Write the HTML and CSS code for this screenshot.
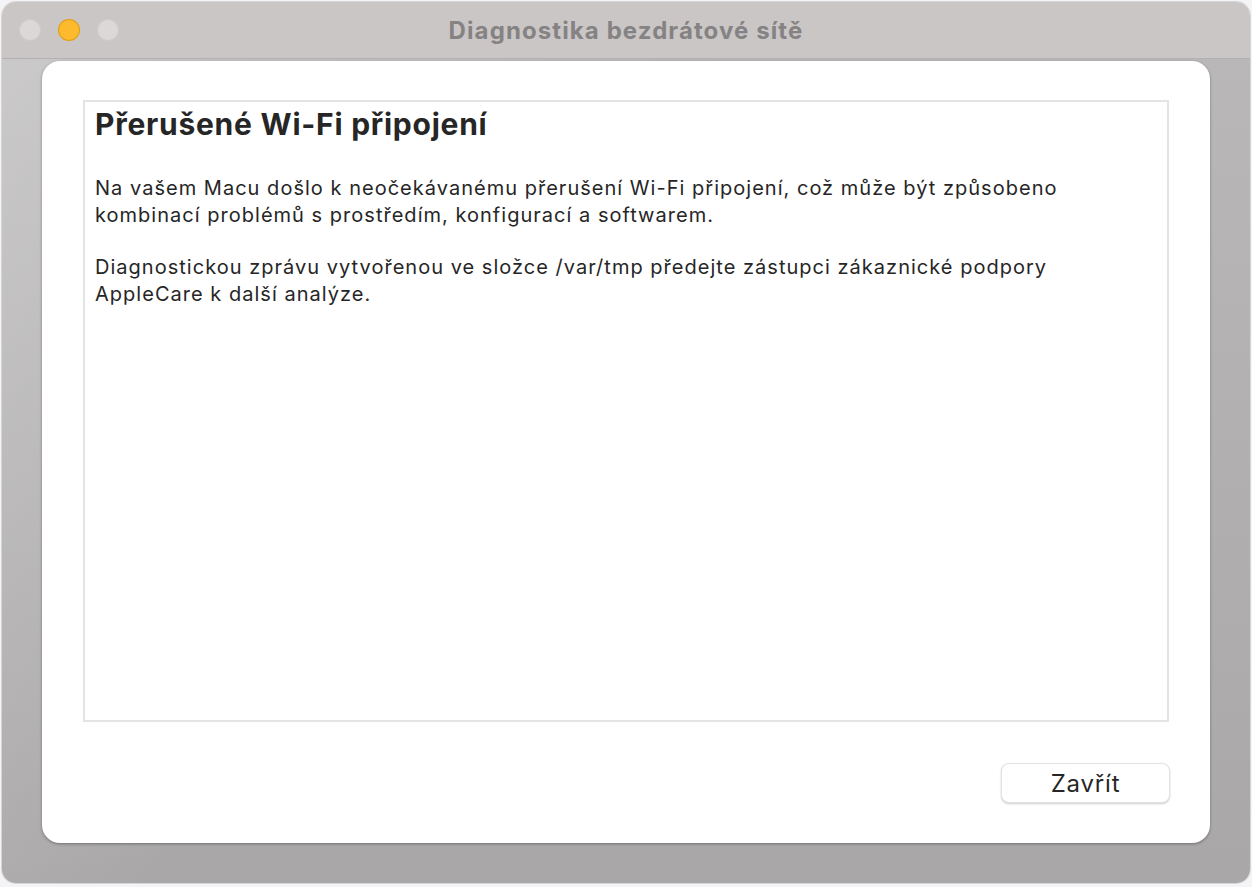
FILE: index.html
```html
<!DOCTYPE html>
<html lang="cs">
<head>
    <meta charset="UTF-8">
    <meta name="viewport" content="width=device-width, initial-scale=1.0">
    <title>Diagnostika bezdrátové sítě</title>
    <link rel="stylesheet" href="styles.css">
</head>
<body>

<div class="window">
    <div class="titlebar">
        <div class="lights">
            <span class="light"></span>
            <span class="light light-min"></span>
            <span class="light"></span>
        </div>
        <div class="title">Diagnostika bezdrátové sítě</div>
    </div>

    <div class="window-body">
        <div class="sheet">
            <div class="report">
                <h1>Přerušené Wi-Fi připojení</h1>
                <p>Na vašem Macu došlo k neočekávanému přerušení Wi-Fi připojení, což může být způsobeno kombinací problémů s prostředím, konfigurací a softwarem.</p>
                <p>Diagnostickou zprávu vytvořenou ve složce /var/tmp předejte zástupci zákaznické podpory AppleCare k další analýze.</p>
            </div>
            <div class="actions">
                <button type="button">Zavřít</button>
            </div>
        </div>
    </div>
</div>

</body>
</html>
```

FILE: styles.css
```css
body {
    margin: 0;
    padding: 2px 2px 4px 2px;
    background: #f4f4f6;
    font-family: Inter, "Noto Sans", sans-serif;
}

.window {
    height: 881px;
    border-radius: 14px;
    overflow: hidden;
    box-shadow: 0 0 0 1px rgba(0, 0, 0, 0.12);
    display: flex;
    flex-direction: column;
}

.titlebar {
    height: 56px;
    background: #cac6c6;
    border-bottom: 1px solid #b3b0b0;
    display: flex;
    align-items: center;
    position: relative;
}

.lights {
    display: flex;
    gap: 17px;
    padding-left: 17px;
}

.light {
    width: 22px;
    height: 22px;
    border-radius: 50%;
    background: #ddd8d8;
    box-shadow: inset 0 0 0 1px rgba(0, 0, 0, 0.06);
}

.light-min {
    background: #fdba2d;
    box-shadow: inset 0 0 0 1px rgba(180, 120, 0, 0.4);
}

.title {
    position: absolute;
    left: 0;
    right: 0;
    text-align: center;
    font-size: 24px;
    font-weight: 700;
    letter-spacing: 1.1px;
    color: #858283;
    pointer-events: none;
}

.window-body {
    flex: 1;
    padding: 2px 40px 40px 40px;
    background:
        linear-gradient(125deg, rgba(255, 255, 255, 0.25) 0%, rgba(255, 255, 255, 0) 40%),
        linear-gradient(180deg, #b9b7b7 0%, #a9a7a7 100%);
}

.sheet {
    height: 100%;
    box-sizing: border-box;
    background: #fff;
    border-radius: 18px;
    box-shadow: 0 1px 3px rgba(0, 0, 0, 0.35);
    padding: 39px 41px 40px 41px;
    display: flex;
    flex-direction: column;
}

.report {
    height: 622px;
    box-sizing: border-box;
    border: 2px solid #e4e4e4;
    padding: 2px 10px;
    color: #262626;
}

.report h1 {
    margin: 0 0 31px 0;
    font-size: 30px;
    font-weight: 700;
    line-height: 40px;
    letter-spacing: 0.75px;
}

.report p {
    max-width: 990px;
    margin: 0 0 25px 0;
    font-size: 20px;
    line-height: 27px;
    letter-spacing: 1.02px;
}

.actions {
    margin-top: auto;
    display: flex;
    justify-content: flex-end;
}

.actions button {
    width: 169px;
    height: 40px;
    margin-right: -1px;
    background: #fff;
    border: 1px solid #e2e2e2;
    border-radius: 8px;
    box-shadow: 0 1px 2px rgba(0, 0, 0, 0.2);
    font-family: Inter, "Noto Sans", sans-serif;
    font-size: 24px;
    letter-spacing: 0.8px;
    color: #262626;
    cursor: pointer;
}
```
